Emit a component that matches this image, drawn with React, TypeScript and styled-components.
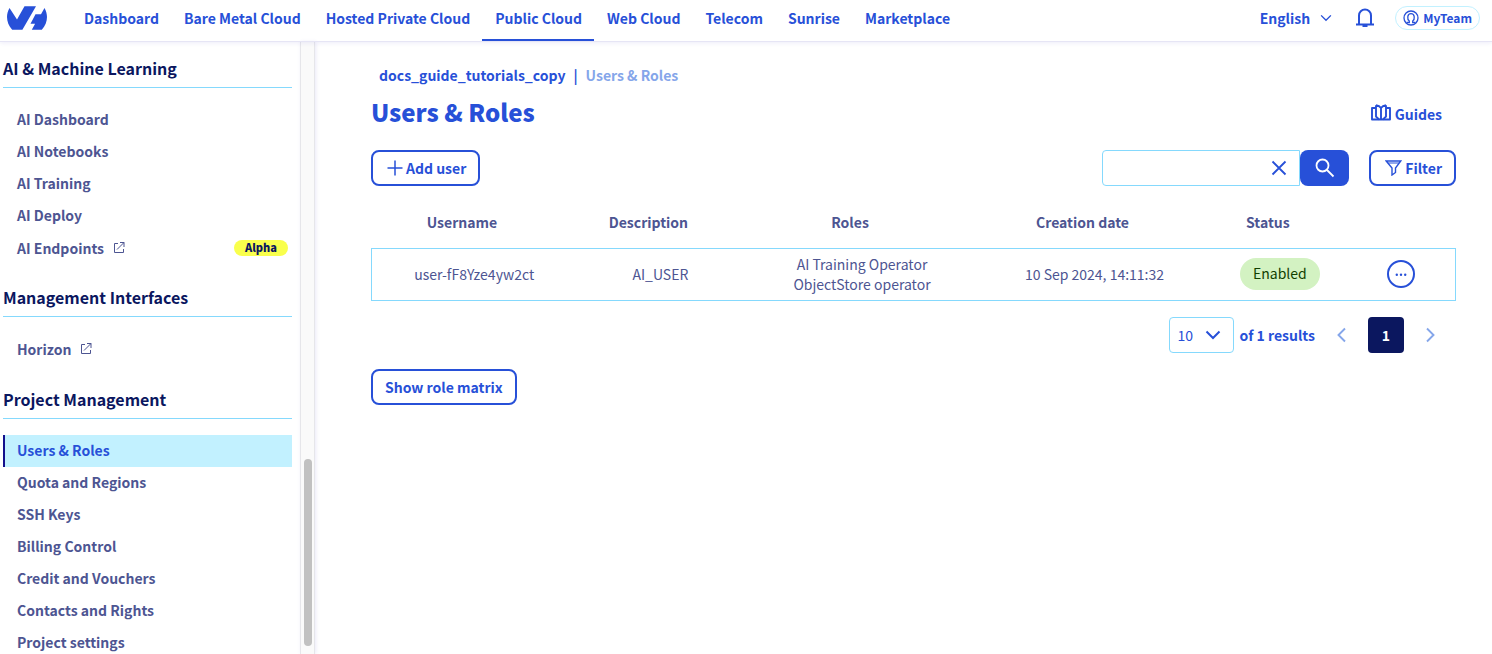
import React from "react";
import styled, { createGlobalStyle, css } from "styled-components";

const color = {
  primary: "#2750d8",
  navy: "#0b175f",
  text: "#4d5592",
  line: "#85d9fd",
  sky: "#c2f1ff",
  muted: "#85a6ea",
};

const GlobalStyle = createGlobalStyle`
  *, *::before, *::after { box-sizing: border-box; }
  body {
    margin: 0;
    background: #fff;
    color: ${color.text};
    font-family: "Noto Sans CJK SC", "Noto Sans", sans-serif;
    font-size: 14px;
    line-height: 20px;
  }
  a { color: inherit; text-decoration: none; }
  button, input, select { font: inherit; color: inherit; margin: 0; }
  button { cursor: pointer; }
  ul { list-style: none; margin: 0; padding: 0; }
  svg { display: block; flex: none; }
`;

const Shell = styled.div`
  display: flex;
  flex-direction: column;
  height: 100vh;
  overflow: hidden;
`;

const TopBar = styled.header`
  display: flex;
  align-items: stretch;
  flex: none;
  height: 42px;
  border-bottom: 1px solid #e6e5f5;
  box-shadow: 0 1px 4px rgba(80, 70, 200, 0.1);
  color: ${color.primary};
  font-weight: 700;
  z-index: 1;
`;

const LogoLink = styled.a`
  display: flex;
  align-items: center;
  width: 71px;
  padding: 0 0 5px 7px;
`;

const MainNav = styled.nav`
  display: flex;
`;

const NavLink = styled.a<{ $active?: boolean }>`
  display: flex;
  align-items: center;
  padding: 0 12px 4px 13px;
  border-bottom: 2px solid ${(p) => (p.$active ? color.primary : "transparent")};
  white-space: nowrap;
`;

const Tools = styled.div`
  display: flex;
  align-items: center;
  margin-left: auto;
  padding: 0 12px 5px 0;
`;

const LanguageButton = styled.button`
  display: flex;
  align-items: center;
  gap: 10px;
  padding: 0;
  border: 0;
  background: none;
  font-weight: 700;
`;

const BellButton = styled.button`
  margin: 0 21px 0 24px;
  padding: 0;
  border: 0;
  background: none;
`;

const TeamButton = styled.button`
  display: flex;
  align-items: center;
  gap: 4px;
  height: 24px;
  padding: 0 7px;
  border: 1px solid ${color.sky};
  border-radius: 12px;
  background: none;
  font-size: 12px;
  font-weight: 700;
`;

const Body = styled.div`
  display: flex;
  flex: 1;
  min-height: 0;
`;

const Sidebar = styled.nav`
  flex: none;
  width: 300px;
  padding: 0 8px 0 3px;
  overflow: hidden;
`;

const SectionTitle = styled.h2`
  display: flex;
  align-items: flex-end;
  height: 52px;
  margin: 0 0 16px;
  padding-bottom: 9px;
  border-bottom: 1px solid ${color.line};
  color: ${color.navy};
  font-size: 16px;
  line-height: 20px;
  font-weight: 700;
`;

const FirstTitle = styled(SectionTitle)`
  height: 46px;
`;

const SideLink = styled.a<{ $active?: boolean; $height: number }>`
  display: flex;
  align-items: center;
  gap: 9px;
  height: ${(p) => p.$height}px;
  padding: 0 4px 2px 12px;
  border-left: 2px solid transparent;
  font-weight: 700;
  ${(p) =>
    p.$active &&
    css`
      border-color: #14108c;
      background: ${color.sky};
      color: ${color.primary};
    `}
`;

const AlphaTag = styled.span`
  margin-left: auto;
  padding: 0 11px 2px;
  border-radius: 8px;
  background: #f9ff4c;
  color: ${color.navy};
  font-size: 11px;
  line-height: 14px;
  font-weight: 900;
`;

const ScrollTrack = styled.div`
  display: flex;
  flex-direction: column;
  justify-content: flex-end;
  align-items: center;
  flex: none;
  width: 15px;
  padding-bottom: 8px;
  border: solid #e6e6ea;
  border-width: 0 1px;
  background: #fafafa;
  box-shadow: 1px 0 4px rgba(80, 70, 200, 0.12);
`;

const ScrollThumb = styled.div`
  width: 8px;
  height: 31%;
  border-radius: 4px;
  background: #c1c1c1;
`;

const Main = styled.main`
  flex: 1;
  min-width: 0;
  padding: 23px 36px 0 56px;
  color: ${color.primary};
`;

const Breadcrumb = styled.nav`
  display: flex;
  gap: 8px;
  padding-left: 8px;
  font-weight: 700;
`;

const Current = styled.span`
  color: ${color.muted};
`;

const TitleRow = styled.div`
  display: flex;
  justify-content: space-between;
  align-items: center;
  height: 40px;
  margin-top: 7px;
  padding-right: 14px;
`;

const Title = styled.h1`
  margin: 0;
  font-size: 24px;
  line-height: 32px;
  font-weight: 900;
`;

const GuidesLink = styled.a`
  display: flex;
  align-items: flex-start;
  gap: 4px;
  padding-top: 4px;
  font-weight: 700;
`;

const Toolbar = styled.div`
  display: flex;
  justify-content: space-between;
  margin-top: 18px;
`;

const ToolGroup = styled.div`
  display: flex;
  gap: 20px;
`;

const OutlineButton = styled.button`
  display: inline-flex;
  align-items: center;
  gap: 3px;
  height: 36px;
  padding: 0 12px;
  border: 2px solid ${color.primary};
  border-radius: 8px;
  background: #fff;
  font-weight: 700;

  > svg { margin-left: 2px; }
`;

const SearchForm = styled.form`
  display: flex;
`;

const SearchField = styled.div`
  display: flex;
  align-items: center;
  width: 198px;
  height: 36px;
  padding-right: 12px;
  border: 1px solid ${color.line};
  border-radius: 4px 0 0 4px;
`;

const SearchInput = styled.input`
  flex: 1;
  min-width: 0;
  height: 100%;
  padding: 0 8px;
  border: 0;
  outline: 0;
  background: none;
`;

const ClearButton = styled.button`
  padding: 0;
  border: 0;
  background: none;
`;

const SearchButton = styled.button`
  display: flex;
  align-items: center;
  justify-content: center;
  width: 49px;
  border: 0;
  border-radius: 8px;
  background: ${color.primary};
  color: #fff;
`;

const Table = styled.table`
  width: 100%;
  margin-top: 12px;
  table-layout: fixed;
  border-collapse: collapse;
  color: ${color.text};
  text-align: center;
`;

const Column = styled.col<{ $share: number }>`
  width: ${(p) => p.$share}%;
`;

const Th = styled.th`
  height: 50px;
  padding: 0 24px 2px 0;
  font-weight: 700;
`;

const BodyRow = styled.tr`
  height: 52px;
  border: 1px solid ${color.line};
`;

const Td = styled.td`
  padding: 0 0 1px;
`;

const StatusBadge = styled.span`
  display: inline-block;
  padding: 0 13px 2px;
  border-radius: 16px;
  background: #d3f2c2;
  color: #113f00;
  line-height: 30px;
  vertical-align: middle;
`;

const MoreButton = styled.button`
  display: inline-flex;
  align-items: center;
  justify-content: center;
  width: 28px;
  height: 28px;
  margin-right: 4px;
  padding: 0;
  border: 2px solid ${color.primary};
  border-radius: 50%;
  background: #fff;
  color: ${color.primary};
  vertical-align: middle;
`;

const Pagination = styled.div`
  display: flex;
  align-items: center;
  justify-content: flex-end;
  margin-top: 16px;
  padding-right: 21px;
`;

const PageSize = styled.div`
  display: grid;
  align-items: center;
  width: 65px;
  height: 36px;
  margin-right: 5px;
  border: 1px solid ${color.line};
  border-radius: 4px;

  > * { grid-area: 1 / 1; }
  > svg { justify-self: end; margin-right: 12px; pointer-events: none; }
`;

const PageSizeSelect = styled.select`
  width: 100%;
  height: 100%;
  padding: 0 7px;
  border: 0;
  background: none;
  appearance: none;
`;

const ResultCount = styled.span`
  font-weight: 700;
`;

const ArrowButton = styled.button`
  margin: 0 22px;
  padding: 0;
  border: 0;
  background: none;
  color: ${color.muted};

  &:last-child { margin-right: 0; }
`;

const PageButton = styled.button`
  width: 36px;
  height: 36px;
  padding: 0;
  border: 0;
  border-radius: 4px;
  background: ${color.navy};
  color: #fff;
  font-weight: 700;
`;

const MatrixRow = styled.div`
  margin-top: 16px;
`;

const Logo = () => (
  <svg width="40" height="24" viewBox="0 0 40 24" fill="currentColor" aria-hidden="true">
    <path d="M2.500 2 10 13.500 17.500.2h11.500L15.400 23.700H5.200C-.6 17.500-1.600 9 2.500 2Z" />
    <path d="M37.500 2 34 8.200h-5.500L23.500 17.800h4.600L24.800 23.700h10C40.600 17.500 41.600 9 37.500 2Z" />
  </svg>
);

const ChevronDown = ({ size, stroke }: { size: number; stroke: number }) => (
  <svg width={size} height={size} viewBox="0 0 16 16" fill="none" stroke="currentColor" strokeWidth={stroke} aria-hidden="true">
    <path d="m1.500 4.500 6.500 6.500 6.500-6.500" />
  </svg>
);

const Bell = () => (
  <svg width="18" height="20" viewBox="0 0 18 20" fill="none" stroke="currentColor" strokeWidth="2" aria-hidden="true">
    <path d="M3 16V7.500a6 6 0 0 1 12 0V16" />
    <path d="M0 16.500h18M6.500 18.200h5" strokeWidth="1.800" />
  </svg>
);

const UserIcon = () => (
  <svg width="16" height="16" viewBox="0 0 16 16" fill="none" stroke="currentColor" strokeWidth="1.300" aria-hidden="true">
    <circle cx="8" cy="8" r="7" />
    <path d="M3.500 12.500H6.300V11C4 9.300 4 3.700 8 3.700s4 5.600 1.700 7.300v1.500h2.800" />
  </svg>
);

const ExternalIcon = () => (
  <svg width="12" height="12" viewBox="0 0 12 12" fill="none" stroke="currentColor" aria-hidden="true">
    <path d="M5 1.500H1.500v9h9V7M7 .500h4V5M11 .500 4 7.500" />
  </svg>
);

const MapIcon = () => (
  <svg width="20" height="17" viewBox="0 0 20 17" fill="none" stroke="currentColor" strokeWidth="1.900" strokeLinejoin="round" aria-hidden="true">
    <path d="M5 4H1v11.500h18V4h-4" />
    <path d="M5 1.200v11.300l3 3M15 1.200v11.300l-3 3M5 1.200c2.500.3 4 1.300 5 2.800 1-1.500 2.500-2.500 5-2.800M10 4v11.500" />
  </svg>
);

const PlusIcon = () => (
  <svg width="16" height="16" viewBox="0 0 16 16" fill="none" stroke="currentColor" strokeWidth="1.500" aria-hidden="true">
    <path d="M8 .5v15M.5 8h15" />
  </svg>
);

const CrossIcon = () => (
  <svg width="16" height="16" viewBox="0 0 16 16" fill="none" stroke="currentColor" strokeWidth="1.800" aria-hidden="true">
    <path d="m1.500 1.500 13 13m0-13-13 13" />
  </svg>
);

const SearchIcon = () => (
  <svg width="20" height="20" viewBox="0 0 20 20" fill="none" stroke="currentColor" strokeWidth="1.800" aria-hidden="true">
    <circle cx="7.500" cy="7.500" r="6" />
    <path d="m12 12 6.500 6.500" />
  </svg>
);

const FilterIcon = () => (
  <svg width="17" height="16" viewBox="0 0 17 16" fill="none" stroke="currentColor" strokeWidth="1.400" aria-hidden="true">
    <path d="M1.200 1h14.600L10.500 8v4.500L7 15V8Z" />
    <path d="M3 3h11" strokeWidth="1" />
  </svg>
);

const DotsIcon = () => (
  <svg width="12" height="4" viewBox="0 0 12 4" fill="currentColor" aria-hidden="true">
    <circle cx="1.800" cy="2.800" r="1.200" />
    <circle cx="6" cy="2.800" r="1.200" />
    <circle cx="10.200" cy="2.800" r="1.200" />
  </svg>
);

const ChevronSide = ({ next }: { next?: boolean }) => (
  <svg width="9" height="16" viewBox="0 0 9 16" fill="none" stroke="currentColor" strokeWidth="1.900" aria-hidden="true">
    <path d={next ? "m1 1.500 6.500 6.500L1 14.500" : "M8 1.500 1.500 8 8 14.500"} />
  </svg>
);

const universes = [
  "Dashboard",
  "Bare Metal Cloud",
  "Hosted Private Cloud",
  "Public Cloud",
  "Web Cloud",
  "Telecom",
  "Sunrise",
  "Marketplace",
];

type Entry = { label: string; external?: boolean; tag?: string; active?: boolean };

const sections: { title: string; entries: Entry[] }[] = [
  {
    title: "AI & Machine Learning",
    entries: [
      { label: "AI Dashboard" },
      { label: "AI Notebooks" },
      { label: "AI Training" },
      { label: "AI Deploy" },
      { label: "AI Endpoints", external: true, tag: "Alpha" },
    ],
  },
  {
    title: "Management Interfaces",
    entries: [{ label: "Horizon", external: true }],
  },
  {
    title: "Project Management",
    entries: [
      { label: "Users & Roles", active: true },
      { label: "Quota and Regions" },
      { label: "SSH Keys" },
      { label: "Billing Control" },
      { label: "Credit and Vouchers" },
      { label: "Contacts and Rights" },
      { label: "Project settings" },
    ],
  },
];

const rowHeight = ({ tag, external }: Entry) => (tag ? 33 : external ? 34 : 32);

const columnShares = [18.9, 15.5, 21.7, 21.2, 13, 9.7];

export default function App() {
  return (
    <Shell>
      <GlobalStyle />
      <TopBar>
        <LogoLink href="#" aria-label="Home">
          <Logo />
        </LogoLink>
        <MainNav>
          {universes.map((name) => (
            <NavLink key={name} href="#" $active={name === "Public Cloud"}>
              {name}
            </NavLink>
          ))}
        </MainNav>
        <Tools>
          <LanguageButton>
            English
            <ChevronDown size={12} stroke={1.8} />
          </LanguageButton>
          <BellButton aria-label="Notifications">
            <Bell />
          </BellButton>
          <TeamButton>
            <UserIcon />
            MyTeam
          </TeamButton>
        </Tools>
      </TopBar>
      <Body>
        <Sidebar>
          {sections.map(({ title, entries }, index) => {
            const Heading = index === 0 ? FirstTitle : SectionTitle;
            return (
              <React.Fragment key={title}>
                <Heading>{title}</Heading>
                <ul>
                  {entries.map((entry) => (
                    <li key={entry.label}>
                      <SideLink href="#" $active={entry.active} $height={rowHeight(entry)}>
                        {entry.label}
                        {entry.external && <ExternalIcon />}
                        {entry.tag && <AlphaTag>{entry.tag}</AlphaTag>}
                      </SideLink>
                    </li>
                  ))}
                </ul>
              </React.Fragment>
            );
          })}
        </Sidebar>
        <ScrollTrack>
          <ScrollThumb />
        </ScrollTrack>
        <Main>
          <Breadcrumb>
            <a href="#">docs_guide_tutorials_copy</a>
            <span>|</span>
            <Current>Users &amp; Roles</Current>
          </Breadcrumb>
          <TitleRow>
            <Title>Users &amp; Roles</Title>
            <GuidesLink href="#">
              <MapIcon />
              Guides
            </GuidesLink>
          </TitleRow>
          <Toolbar>
            <OutlineButton>
              <PlusIcon />
              Add user
            </OutlineButton>
            <ToolGroup>
              <SearchForm>
                <SearchField>
                  <SearchInput type="text" aria-label="Search" />
                  <ClearButton type="button" aria-label="Clear">
                    <CrossIcon />
                  </ClearButton>
                </SearchField>
                <SearchButton type="button" aria-label="Run search">
                  <SearchIcon />
                </SearchButton>
              </SearchForm>
              <OutlineButton>
                <FilterIcon />
                Filter
              </OutlineButton>
            </ToolGroup>
          </Toolbar>
          <Table>
            <colgroup>
              {columnShares.map((share, i) => (
                <Column key={i} $share={share} />
              ))}
            </colgroup>
            <thead>
              <tr>
                <Th>Username</Th>
                <Th>Description</Th>
                <Th>Roles</Th>
                <Th>Creation date</Th>
                <Th>Status</Th>
                <Th aria-label="Actions" />
              </tr>
            </thead>
            <tbody>
              <BodyRow>
                <Td>user-fF8Yze4yw2ct</Td>
                <Td>AI_USER</Td>
                <Td>
                  AI Training Operator
                  <br />
                  ObjectStore operator
                </Td>
                <Td>10 Sep 2024, 14:11:32</Td>
                <Td>
                  <StatusBadge>Enabled</StatusBadge>
                </Td>
                <Td>
                  <MoreButton aria-label="Actions">
                    <DotsIcon />
                  </MoreButton>
                </Td>
              </BodyRow>
            </tbody>
          </Table>
          <Pagination>
            <PageSize>
              <PageSizeSelect aria-label="Results per page" defaultValue="10">
                <option>10</option>
                <option>25</option>
                <option>50</option>
              </PageSizeSelect>
              <ChevronDown size={16} stroke={2} />
            </PageSize>
            <ResultCount>of 1 results</ResultCount>
            <ArrowButton aria-label="Previous page">
              <ChevronSide />
            </ArrowButton>
            <PageButton>1</PageButton>
            <ArrowButton aria-label="Next page">
              <ChevronSide next />
            </ArrowButton>
          </Pagination>
          <MatrixRow>
            <OutlineButton>Show role matrix</OutlineButton>
          </MatrixRow>
        </Main>
      </Body>
    </Shell>
  );
}
